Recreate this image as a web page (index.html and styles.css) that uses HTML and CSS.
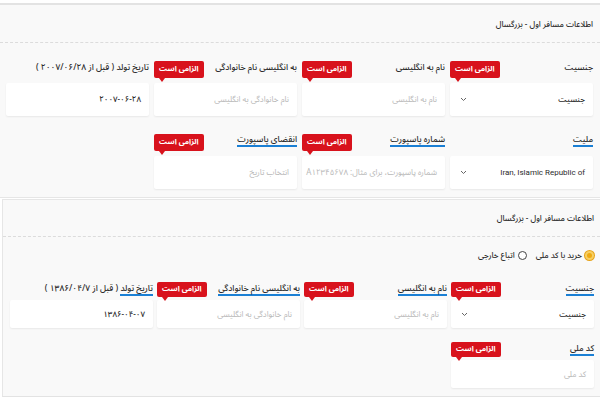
FILE: index.html
```html
<!DOCTYPE html>
<html lang="fa" dir="rtl">
<head>
<meta charset="utf-8">
<title>اطلاعات مسافر</title>
<link rel="stylesheet" href="styles.css">
</head>
<body>
<section class="card card-a">
  <div class="head">اطلاعات مسافر اول - بزرگسال</div>
  <div class="grid">
    <div class="field">
      <div class="lz"><span class="label plain">جنسیت</span></div>
      <span class="badge">الزامی است</span>
      <div class="box"><span class="val">جنسیت</span><svg class="chev" width="7" height="5" viewBox="0 0 7 5"><path d="M1 1l2.5 2.5L6 1" fill="none" stroke="#666" stroke-width="1"/></svg></div>
    </div>
    <div class="field">
      <div class="lz"><span class="label plain">نام به انگلیسی</span></div>
      <span class="badge">الزامی است</span>
      <div class="box"><span class="ph">نام به انگلیسی</span></div>
    </div>
    <div class="field">
      <div class="lz"><span class="label plain">به انگلیسی نام خانوادگی</span></div>
      <span class="badge">الزامی است</span>
      <div class="box"><span class="ph">نام خانوادگی به انگلیسی</span></div>
    </div>
    <div class="field">
      <div class="lz"><span class="label plain">تاریخ تولد ( قبل از ۲۰۰۷/۰۶/۲۸ )</span></div>
      <div class="box"><span class="val">۲۰۰۷-۰۶-۲۸</span></div>
    </div>
    <div class="field">
      <div class="lz"><span class="label ul">ملیت</span></div>
      <div class="box"><span class="val latin">Iran, Islamic Republic of</span><svg class="chev" width="7" height="5" viewBox="0 0 7 5"><path d="M1 1l2.5 2.5L6 1" fill="none" stroke="#666" stroke-width="1"/></svg></div>
    </div>
    <div class="field">
      <div class="lz"><span class="label ul">شماره پاسپورت</span></div>
      <span class="badge">الزامی است</span>
      <div class="box"><span class="ph">شماره پاسپورت، برای مثال: A۱۲۳۴۵۶۷۸</span></div>
    </div>
    <div class="field">
      <div class="lz"><span class="label ul">انقضای پاسپورت</span></div>
      <span class="badge">الزامی است</span>
      <div class="box"><span class="ph">انتخاب تاریخ</span></div>
    </div>
  </div>
</section>

<section class="card card-b">
  <div class="head">اطلاعات مسافر اول - بزرگسال</div>
  <div class="radios">
    <label class="opt"><span class="radio on"></span><span>خرید با کد ملی</span></label>
    <label class="opt"><span class="radio"></span><span>اتباع خارجی</span></label>
  </div>
  <div class="grid">
    <div class="field">
      <div class="lz"><span class="label ul">جنسیت</span></div>
      <span class="badge">الزامی است</span>
      <div class="box"><span class="val">جنسیت</span><svg class="chev" width="7" height="5" viewBox="0 0 7 5"><path d="M1 1l2.5 2.5L6 1" fill="none" stroke="#666" stroke-width="1"/></svg></div>
    </div>
    <div class="field">
      <div class="lz"><span class="label ul">نام به انگلیسی</span></div>
      <span class="badge">الزامی است</span>
      <div class="box"><span class="ph">نام به انگلیسی</span></div>
    </div>
    <div class="field">
      <div class="lz"><span class="label ul">به انگلیسی نام خانوادگی</span></div>
      <span class="badge">الزامی است</span>
      <div class="box"><span class="ph">نام خانوادگی به انگلیسی</span></div>
    </div>
    <div class="field">
      <div class="lz"><span class="label"><span class="ul">تاریخ تولد</span> ( قبل از ۱۳۸۶/۰۴/۷ )</span></div>
      <div class="box"><span class="val">۱۳۸۶-۰۴-۰۷</span></div>
    </div>
    <div class="field">
      <div class="lz"><span class="label ul">کد ملی</span></div>
      <span class="badge">الزامی است</span>
      <div class="box"><span class="ph">کد ملی</span></div>
    </div>
  </div>
</section>
</body>
</html>
```

FILE: styles.css
```css
html, body {
  margin: 0;
  padding: 0;
  background: #ffffff;
}
body {
  font-family: "Noto Sans Arabic", "Noto Naskh Arabic", "DejaVu Sans", sans-serif;
  color: #2b2b2b;
  direction: rtl;
}
.card {
  background: #f9f9f9;
}
.card-a {
  margin-top: 3px;
  border-top: 2px solid #e3e3e3;
  border-bottom: 1px solid #e6e6e6;
}
.card-b {
  margin-top: 1px;
  margin-left: 2px;
  border-top: 1px solid #e6e6e6;
  border-left: 1px solid #e6e6e6;
  border-bottom: 1px solid #e3e3e3;
}
.head {
  box-sizing: border-box;
  height: 38px;
  line-height: 38px;
  padding: 1px 7px 0;
  font-size: 8px;
  font-weight: 500;
  color: #2b2b2b;
  border-bottom: 1px dashed #dcdcdc;
}
.card-b .head {
  height: 37px;
  line-height: 36px;
  padding-right: 6px;
}
.radios {
  box-sizing: border-box;
  height: 31px;
  padding: 5px 6px 0 0;
  display: flex;
  align-items: center;
  gap: 9px;
  font-size: 8px;
  font-weight: 500;
}
.opt {
  display: flex;
  align-items: center;
  gap: 3px;
}
.radio {
  box-sizing: border-box;
  width: 9px;
  height: 9px;
  border-radius: 50%;
  border: 1px solid #444;
  background: #fff;
}
.radio.on {
  border: 2px solid #f6cf63;
  background: #eea912;
  box-shadow: 0 0 0 1px #e6a31a;
}
.grid {
  display: grid;
  grid-template-columns: repeat(4, 1fr);
  column-gap: 5px;
  padding: 0 7px 8px 6px;
}
.card-b .grid {
  column-gap: 4px;
  padding: 0 6px 8px 7px;
}
.field {
  position: relative;
  min-width: 0;
}
.lz {
  box-sizing: border-box;
  height: 40px;
  display: flex;
  align-items: flex-end;
  padding-bottom: 9px;
}
.card-b .lz {
  height: 32px;
  padding-bottom: 4px;
}
.label {
  font-size: 8.5px;
  font-weight: 500;
  line-height: 13px;
  white-space: nowrap;
  color: #2b2b2b;
}
.ul {
  border-bottom: 2px solid #1a7fd4;
  line-height: 12px;
}
.label .ul {
  display: inline-block;
}
.box {
  box-sizing: border-box;
  height: 33px;
  background: #ffffff;
  border-radius: 2px;
  box-shadow: 0 1px 2px rgba(0, 0, 0, 0.07);
  display: flex;
  align-items: center;
  justify-content: space-between;
  padding: 0 8px 0 10px;
  font-size: 8px;
  white-space: nowrap;
  overflow: hidden;
}
.card-b .box {
  height: 28px;
}
.val {
  color: #2b2b2b;
  font-weight: 500;
}
.latin {
  font-family: "Roboto", "DejaVu Sans", sans-serif;
  font-size: 8px;
  font-weight: 400;
  direction: ltr;
}
.ph {
  color: #b8b8b8;
}
.chev {
  display: block;
}
.badge {
  position: absolute;
  left: 0;
  bottom: 38px;
  height: 17px;
  line-height: 17px;
  padding: 0 5px;
  border-radius: 2px;
  background: #d8121c;
  color: #ffffff;
  font-size: 7.5px;
  font-weight: bold;
  white-space: nowrap;
}
.badge::after {
  content: "";
  position: absolute;
  left: 5px;
  top: 100%;
  border-left: 3px solid transparent;
  border-right: 3px solid transparent;
  border-top: 4px solid #d8121c;
}
.card-b .badge {
  bottom: 31px;
  height: 15px;
  line-height: 15px;
}
```
